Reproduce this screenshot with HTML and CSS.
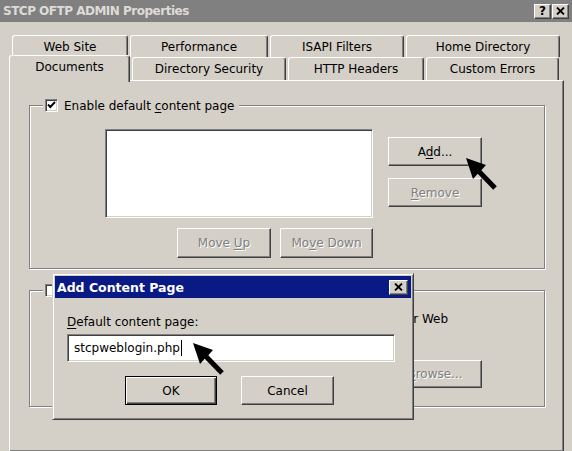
FILE: index.html
```html
<!DOCTYPE html>
<html>
<head>
<meta charset="utf-8">
<link rel="stylesheet" href="styles.css">
</head>
<body>
<div class="window">
  <div class="titlebar">
    <span class="title">STCP OFTP ADMIN Properties</span>
    <div class="tb-buttons">
      <span class="tbtn help">?</span>
      <span class="tbtn"><svg width="9" height="8" viewBox="0 0 9 8"><path d="M1 0.5 L8 7.5 M8 0.5 L1 7.5" stroke="#000" stroke-width="1.8"/></svg></span>
    </div>
  </div>

  <div class="tabs">
    <div class="tabrow back">
      <div class="tab">Web Site</div>
      <div class="tab">Performance</div>
      <div class="tab">ISAPI Filters</div>
      <div class="tab">Home Directory</div>
    </div>
    <div class="tabrow front">
      <div class="tab active">Documents</div>
      <div class="tab">Directory Security</div>
      <div class="tab">HTTP Headers</div>
      <div class="tab">Custom Errors</div>
    </div>
  </div>

  <div class="panel">
    <div class="group">
      <div class="legend">
        <span class="check checked"><svg width="9" height="9" viewBox="0 0 9 9"><path d="M1 3.5 L3.3 6 L8 1" stroke="#000" stroke-width="1.9" fill="none"/></svg></span>
        <span>Enable default <u>c</u>ontent page</span>
      </div>
      <div class="g1body">
        <div class="listbox"></div>
        <div class="sidebtns">
          <div class="btn"><span>A<u>d</u>d...</span></div>
          <div class="btn disabled"><span><u>R</u>emove</span></div>
        </div>
        <div class="movebtns">
          <div class="btn disabled moveup"><span>Move <u>U</u>p</span></div>
          <div class="btn disabled movedown"><span>Mo<u>v</u>e Down</span></div>
        </div>
      </div>
    </div>

    <div class="group group2">
      <div class="legend">
        <span class="check"></span>
        <span>Enable document f<u>o</u>oter</span>
      </div>
      <div class="g2body">
        <p class="footertext">Append an HTML formatted footer to every document your Web<br>server returns.</p>
        <div class="browserow">
          <div class="field"></div>
          <div class="btn disabled browse"><span><u>B</u>rowse...</span></div>
        </div>
      </div>
    </div>
  </div>
</div>

<div class="dialog">
  <div class="caption">
    <span class="caption-title">Add Content Page</span>
    <span class="tbtn close"><svg width="9" height="8" viewBox="0 0 9 8"><path d="M1 0.5 L8 7.5 M8 0.5 L1 7.5" stroke="#000" stroke-width="1.8"/></svg></span>
  </div>
  <div class="dlgbody">
    <div class="dlglabel"><u>D</u>efault content page:</div>
    <div class="dlginput"><span class="typed">stcpweblogin.php</span></div>
    <div class="dlgbtns">
      <div class="btn default okbtn"><span>OK</span></div>
      <div class="btn cancelbtn"><span>Cancel</span></div>
    </div>
  </div>
</div>

<svg class="arrows" width="572" height="451" viewBox="0 0 572 451">
  <polygon points="466,158 486,165 481.3,170.3 496.8,186.3 493.2,189.7 477.7,173.7 473,179" fill="#000"/>
  <polygon points="193,343 213,350 208.3,355.3 223.8,371.3 220.2,374.7 204.7,358.7 200,364" fill="#000"/>
</svg>
</body>
</html>
```

FILE: styles.css
```css
* { box-sizing: border-box; }
html, body { margin: 0; padding: 0; }
body {
  width: 572px;
  height: 451px;
  overflow: hidden;
  position: relative;
  background: #d4d0c8;
  font-family: "DejaVu Sans", sans-serif;
  font-size: 12px;
  color: #000;
}
u { text-decoration-thickness: 1px; text-underline-offset: 2px; }

/* Title bar */
.titlebar {
  height: 22px;
  background: #808080;
  display: flex;
  align-items: center;
  justify-content: space-between;
  padding: 0 3px 0 3px;
}
.title {
  color: #dedbd6;
  font-weight: bold;
  font-size: 12px;
  letter-spacing: -0.5px;
}
.tb-buttons { display: flex; gap: 1px; }
.tbtn {
  width: 17px;
  height: 15px;
  background: #d4d0c8;
  border: 1px solid;
  border-color: #fff #404040 #404040 #fff;
  box-shadow: inset -1px -1px #808080;
  display: flex;
  align-items: center;
  justify-content: center;
  font-weight: bold;
  font-size: 12px;
  line-height: 1;
}

/* Tabs */
.tabs { padding-top: 13px; }
.tabrow { display: grid; column-gap: 2px; }
.tabrow.back {
  margin-left: 12px;
  height: 22px;
  grid-template-columns: 116px 138px 134px 154px;
}
.tabrow.front {
  margin-left: 9px;
  height: 23px;
  grid-template-columns: 121px 154px 136px 133px;
}
.tab {
  border-top: 1px solid #fff;
  border-left: 1px solid #fff;
  border-right: 1px solid #404040;
  box-shadow: inset -1px 0 #808080;
  border-radius: 3px 3px 0 0;
  background: #d4d0c8;
  display: flex;
  align-items: center;
  justify-content: center;
}
.tab.active {
  margin-top: -2px;
  margin-bottom: -2px;
  z-index: 1;
  align-items: flex-start;
  padding-top: 4px;
}

/* Panel */
.panel {
  margin-left: 9px;
  width: 555px;
  height: 372px;
  border: 1px solid;
  border-color: #fff #404040 #404040 #fff;
  box-shadow: inset -1px -1px #808080;
  padding-top: 24px;
}
.group {
  margin: 0 18px 0 19px;
  border: 1px solid #808080;
  box-shadow: 1px 1px 0 #fff, inset 1px 1px 0 #fff;
}
.group2 { margin-top: 21px; height: 117px; }
.legend {
  display: flex;
  align-items: center;
  gap: 6px;
  width: max-content;
  height: 15px;
  margin: -8px 0 0 13px;
  padding: 0 5px 0 2px;
  background: #d4d0c8;
}
.check {
  width: 13px;
  height: 13px;
  background: #fff;
  border: 1px solid;
  border-color: #808080 #fff #fff #808080;
  box-shadow: inset 1px 1px #404040, inset -1px -1px #d4d0c8;
  display: flex;
  align-items: center;
  justify-content: center;
}

.g1body {
  display: grid;
  grid-template-columns: 268px 94px;
  column-gap: 15px;
  row-gap: 10px;
  padding: 16px 0 10px 75px;
}
.listbox {
  height: 89px;
  background: #fff;
  border: 1px solid;
  border-color: #808080 #fff #fff #808080;
  box-shadow: inset 1px 1px #404040, inset -1px -1px #d4d0c8;
}
.sidebtns {
  display: flex;
  flex-direction: column;
  gap: 12px;
  padding-top: 8px;
}
.movebtns {
  display: flex;
  justify-content: flex-end;
  gap: 9px;
}
.btn {
  height: 29px;
  background: #d4d0c8;
  border: 1px solid;
  border-color: #fff #404040 #404040 #fff;
  box-shadow: inset -1px -1px #808080;
  display: flex;
  align-items: center;
  justify-content: center;
}
.btn.disabled {
  color: #808080;
  text-shadow: 1px 1px 0 #fff;
}
.moveup { width: 94px; height: 30px; }
.movedown { width: 93px; height: 30px; }

.g2body { padding: 14px 0 0 34px; }
.footertext { margin: 0; line-height: 15px; white-space: nowrap; }
.browserow {
  display: flex;
  gap: 13px;
  margin-top: 18px;
}
.field {
  width: 311px;
  height: 28px;
  background: #d4d0c8;
  border: 1px solid;
  border-color: #808080 #fff #fff #808080;
  box-shadow: inset 1px 1px #404040;
}
.browse { width: 94px; height: 28px; }

/* Dialog overlay */
.dialog {
  position: absolute;
  left: 52px;
  top: 273px;
  width: 362px;
  height: 147px;
  background: #d4d0c8;
  border: 1px solid;
  border-color: #d4d0c8 #404040 #404040 #d4d0c8;
  box-shadow: inset 1px 1px #fff, inset -1px -1px #808080;
  padding: 2px;
}
.caption {
  height: 22px;
  background: #0a1a84;
  display: flex;
  align-items: center;
  justify-content: space-between;
  padding: 0 3px 0 2px;
}
.caption-title {
  color: #fff;
  font-weight: bold;
  font-size: 12.5px;
  letter-spacing: 0;
}
.close { width: 19px; height: 15px; }
.dlgbody { padding: 17px 0 0 12px; }
.dlglabel { line-height: 15px; }
.dlginput {
  margin-top: 4px;
  width: 328px;
  height: 28px;
  background: #fff;
  border: 1px solid;
  border-color: #808080 #fff #fff #808080;
  box-shadow: inset 1px 1px #404040, inset -1px -1px #d4d0c8;
  display: flex;
  align-items: center;
  padding-left: 6px;
}
.typed {
  border-right: 1px solid #000;
  padding-right: 1px;
  line-height: 16px;
}
.dlgbtns {
  display: flex;
  gap: 24px;
  margin: 14px 0 0 58px;
}
.okbtn { width: 92px; }
.cancelbtn { width: 93px; }
.btn.default {
  border: 1px solid #000;
  box-shadow: inset 1px 1px #fff, inset -1px -1px #404040, inset -2px -2px #808080;
}

.arrows {
  position: absolute;
  left: 0;
  top: 0;
  pointer-events: none;
}
```
